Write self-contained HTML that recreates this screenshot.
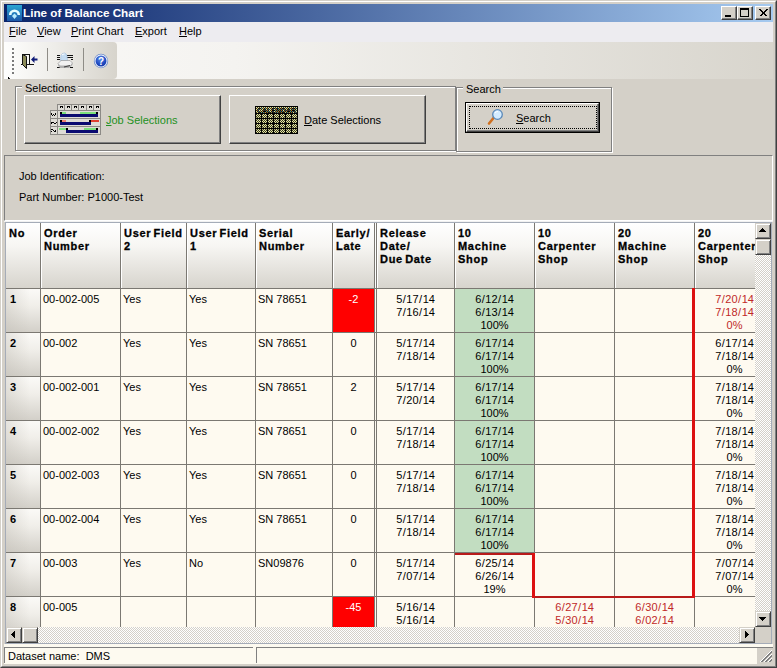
<!DOCTYPE html><html><head><meta charset="utf-8"><style>
*{margin:0;padding:0;box-sizing:border-box}
html,body{width:777px;height:668px;overflow:hidden;background:#D4D0C8;font-family:"Liberation Sans",sans-serif;font-size:11px;color:#000}
.a{position:absolute}
.t{position:absolute;white-space:nowrap;line-height:13px}
.c{text-align:center}
.b{font-weight:bold}
.h{letter-spacing:0.7px;word-spacing:-1.5px;-webkit-text-stroke:0.3px #000}
.ul{text-decoration:underline}
i{font-style:normal;margin:0 0.5px}
</style></head><body>

<div class="a" style="left:0;top:0;width:777px;height:668px;border-top:1px solid #D4D0C8;border-left:1px solid #D4D0C8;border-right:1px solid #404040;border-bottom:1px solid #404040"></div>
<div class="a" style="left:1px;top:1px;width:775px;height:666px;border-top:1px solid #fff;border-left:1px solid #fff;border-right:1px solid #808080;border-bottom:1px solid #808080"></div>
<div class="a" style="left:4px;top:4px;width:769px;height:18px;background:linear-gradient(to right,#0A246A,#A6CAF0)"></div>
<svg class="a" style="left:7px;top:5px" width="15" height="16"><defs><linearGradient id="ig" x1="0" y1="0" x2="0" y2="1"><stop offset="0" stop-color="#2AA6D2"/><stop offset="1" stop-color="#1C56A8"/></linearGradient><filter id="gl" x="-50%" y="-50%" width="200%" height="200%"><feGaussianBlur stdDeviation="0.6"/></filter></defs><rect width="15" height="16" fill="url(#ig)"/><g filter="url(#gl)"><path d="M3.2 10 A4.3 4.3 0 0 1 11.8 10" stroke="#E4FCFF" stroke-width="2.6" fill="none"/><path d="M7.5 8.5 L10 11 L7.5 14 L5 11 Z" fill="#B8ECFF"/></g></svg>
<div class="t b" style="left:23px;top:6px;color:#fff;font-size:11.7px;line-height:14px">Line of Balance Chart</div>
<div class="a" style="left:721px;top:6px;width:16px;height:14px;background:#D4D0C8;border-top:1px solid #fff;border-left:1px solid #fff;border-right:1px solid #404040;border-bottom:1px solid #404040;box-shadow:inset -1px -1px 0 #808080"></div>
<div class="a" style="left:737px;top:6px;width:16px;height:14px;background:#D4D0C8;border-top:1px solid #fff;border-left:1px solid #fff;border-right:1px solid #404040;border-bottom:1px solid #404040;box-shadow:inset -1px -1px 0 #808080"></div>
<div class="a" style="left:755px;top:6px;width:16px;height:14px;background:#D4D0C8;border-top:1px solid #fff;border-left:1px solid #fff;border-right:1px solid #404040;border-bottom:1px solid #404040;box-shadow:inset -1px -1px 0 #808080"></div>
<div class="a" style="left:725px;top:15px;width:6px;height:2px;background:#000"></div>
<div class="a" style="left:740px;top:8px;width:9px;height:9px;border:1px solid #000;border-top-width:2px"></div>
<svg class="a" style="left:755px;top:6px" width="16" height="14"><path d="M4.5 3.5 L11.5 10.5 M5.5 3.5 L12.5 10.5 M11.5 3.5 L4.5 10.5 M12.5 3.5 L5.5 10.5" stroke="#000" stroke-width="1" shape-rendering="crispEdges"/></svg>
<div class="a" style="left:4px;top:22px;width:769px;height:20px;background:#EDECF0"></div>
<div class="t" style="left:9px;top:25px"><span class="ul">F</span>ile</div>
<div class="t" style="left:37px;top:25px"><span class="ul">V</span>iew</div>
<div class="t" style="left:71px;top:25px"><span class="ul">P</span>rint Chart</div>
<div class="t" style="left:135px;top:25px"><span class="ul">E</span>xport</div>
<div class="t" style="left:179px;top:25px"><span class="ul">H</span>elp</div>
<div class="a" style="left:4px;top:42px;width:769px;height:37px;background:linear-gradient(to right,#FAF9F7,#F4F3F0 30%,#D8D5CD)"></div>
<div class="a" style="left:4px;top:42px;width:113px;height:37px;border-radius:0 4px 4px 0;background:linear-gradient(to right,#FEFEFD,#EEEDE9 45%,#D7D4CC)"></div>
<div class="a" style="left:12px;top:48px;width:2px;height:26px;background:repeating-linear-gradient(to bottom,#7A7A7A 0 2px,transparent 2px 4px)"></div>
<div class="a" style="left:47px;top:48px;width:1px;height:23px;background:#8E8C86"></div>
<div class="a" style="left:83px;top:48px;width:1px;height:23px;background:#8E8C86"></div>
<div class="a" style="left:8px;top:77px;width:1px;height:2px;background:#000"></div><div class="a" style="left:9px;top:78px;width:1px;height:1px;background:#222"></div>
<svg class="a" style="left:20px;top:52px" width="20" height="18"><path d="M2 2.5 H9.5 V12.5" fill="none" stroke="#111" shape-rendering="crispEdges"/><path d="M1 12.5 H14" stroke="#111" shape-rendering="crispEdges"/><path d="M2.5 2.5 L6.5 4.5 L6.5 16.5 L2.5 12.5 Z" fill="#8C8C58" stroke="#111"/><path d="M11 7.5 L14.5 4 V6.5 H17.5 V8.5 H14.5 V11 Z" fill="#101C78"/></svg>
<svg class="a" style="left:56px;top:52px" width="18" height="18"><g fill="#111" shape-rendering="crispEdges"><rect x="1" y="3" width="3" height="1"/><rect x="1" y="5" width="3" height="1"/><rect x="1" y="7" width="3" height="1"/><rect x="11" y="3" width="6" height="1"/><rect x="11" y="5" width="6" height="1"/><rect x="15" y="7" width="2" height="1"/><rect x="1" y="15" width="3" height="1"/><rect x="14" y="15" width="3" height="1"/></g><path d="M4.5 9 L5 3.5 Q6 1 8.5 1 Q10.5 1.5 11 4 L11.5 9 Z" fill="#C4DCF2" stroke="#9CB8D8" stroke-width="0.6"/><path d="M6 3 Q7 2 8.5 2" stroke="#fff" stroke-width="1" fill="none"/><path d="M2 11.5 L5 8.5 H14 L16.5 11 L14.5 14 H4 Z" fill="#F2F2F2" stroke="#9A9A9A" stroke-width="0.7"/><path d="M4 14 L2 11.5 V13.5 L4 16 H13 L16.5 13 V11 L14.5 14 Z" fill="#B0B0B0"/><path d="M8 15 L14 13.5" stroke="#444" stroke-width="1.2"/></svg>
<svg class="a" style="left:93px;top:53px" width="16" height="16"><defs><radialGradient id="hg" cx="0.45" cy="0.3" r="0.75"><stop offset="0" stop-color="#5A8AE6"/><stop offset="0.7" stop-color="#1C46BE"/><stop offset="1" stop-color="#1438A0"/></radialGradient></defs><circle cx="8" cy="8" r="7.2" fill="#6F8CC8"/><circle cx="8" cy="8" r="6.4" fill="#F4F8FF"/><circle cx="8" cy="8" r="5.5" fill="url(#hg)"/><text x="8" y="11.8" font-size="10" font-weight="bold" fill="#fff" text-anchor="middle" font-family="Liberation Sans">?</text></svg>
<div class="a" style="left:15px;top:86px;width:441px;height:65px;border:1px solid #808080;box-shadow:1px 1px 0 #fff, inset 1px 1px 0 #fff"></div>
<div class="t" style="left:22px;top:82px;background:#D4D0C8;padding:0 2px 0 3px">Selections</div>
<div class="a" style="left:456px;top:87px;width:156px;height:65px;border:1px solid #808080;box-shadow:1px 1px 0 #fff, inset 1px 1px 0 #fff"></div>
<div class="t" style="left:463px;top:83px;background:#D4D0C8;padding:0 2px 0 3px">Search</div>
<div class="a" style="left:24px;top:95px;width:197px;height:49px;background:#D4D0C8;border-top:1px solid #fff;border-left:1px solid #fff;border-right:1px solid #404040;border-bottom:1px solid #404040;box-shadow:inset -1px -1px 0 #808080"></div>
<div class="a" style="left:229px;top:95px;width:197px;height:49px;background:#D4D0C8;border-top:1px solid #fff;border-left:1px solid #fff;border-right:1px solid #404040;border-bottom:1px solid #404040;box-shadow:inset -1px -1px 0 #808080"></div>
<div class="t" style="left:106px;top:114px;color:#239023"><span class="ul">J</span>ob Selections</div>
<div class="t" style="left:304px;top:114px"><span class="ul">D</span>ate Selections</div>
<div class="a" style="left:465px;top:102px;width:135px;height:31px;border:1px solid #000"></div>
<div class="a" style="left:466px;top:103px;width:133px;height:29px;background:#D4D0C8;border-top:1px solid #fff;border-left:1px solid #fff;border-right:1px solid #404040;border-bottom:1px solid #404040;box-shadow:inset -1px -1px 0 #808080"></div>
<div class="a" style="left:469px;top:106px;width:128px;height:23px;border:1px dotted #000"></div>
<div class="t" style="left:516px;top:112px"><span class="ul">S</span>earch</div>
<svg class="a" style="left:487px;top:108px" width="16" height="19"><path d="M6.5 10 L2 15.5" stroke="#D07020" stroke-width="2.6" stroke-linecap="round"/><circle cx="10.5" cy="6.5" r="4.8" fill="#D4ECFF" stroke="#5A88B8" stroke-width="1.3"/><path d="M8 5 Q9 3.5 11 3.5" stroke="#fff" stroke-width="1" fill="none"/></svg>
<svg class="a" style="left:50px;top:104px" width="51" height="31" shape-rendering="crispEdges"><rect x="7" y="0" width="44" height="31" fill="#8C8A86"/><rect x="0" y="6" width="51" height="25" fill="#8C8A86"/><rect x="8" y="1" width="6" height="5" fill="#DEDCD6"/><rect x="10" y="2" width="3" height="1" fill="#000"/><rect x="10" y="3" width="1" height="1" fill="#000"/><rect x="12" y="3" width="1" height="1" fill="#000"/><rect x="15" y="1" width="6" height="5" fill="#DEDCD6"/><rect x="17" y="2" width="3" height="1" fill="#000"/><rect x="17" y="3" width="1" height="1" fill="#000"/><rect x="19" y="3" width="1" height="1" fill="#000"/><rect x="22" y="1" width="6" height="5" fill="#DEDCD6"/><rect x="24" y="2" width="3" height="1" fill="#000"/><rect x="24" y="3" width="1" height="1" fill="#000"/><rect x="26" y="3" width="1" height="1" fill="#000"/><rect x="29" y="1" width="7" height="5" fill="#DEDCD6"/><rect x="31" y="2" width="3" height="1" fill="#000"/><rect x="31" y="3" width="1" height="1" fill="#000"/><rect x="33" y="3" width="1" height="1" fill="#000"/><rect x="37" y="1" width="6" height="5" fill="#DEDCD6"/><rect x="39" y="2" width="3" height="1" fill="#000"/><rect x="39" y="3" width="1" height="1" fill="#000"/><rect x="41" y="3" width="1" height="1" fill="#000"/><rect x="44" y="1" width="6" height="5" fill="#DEDCD6"/><rect x="46" y="2" width="3" height="1" fill="#000"/><rect x="46" y="3" width="1" height="1" fill="#000"/><rect x="48" y="3" width="1" height="1" fill="#000"/><rect x="1" y="7" width="6" height="7" fill="#DEDCD6"/><rect x="8" y="7" width="42" height="7" fill="#DEDCD6"/><rect x="1" y="9" width="1" height="1" fill="#000"/><rect x="1" y="10" width="1" height="1" fill="#000"/><rect x="2" y="11" width="1" height="1" fill="#000"/><rect x="3" y="10" width="1" height="1" fill="#000"/><rect x="4" y="11" width="1" height="1" fill="#000"/><rect x="5" y="10" width="1" height="1" fill="#000"/><rect x="5" y="9" width="1" height="1" fill="#000"/><rect x="1" y="15" width="6" height="7" fill="#DEDCD6"/><rect x="8" y="15" width="42" height="7" fill="#DEDCD6"/><rect x="1" y="19" width="1" height="1" fill="#000"/><rect x="2" y="18" width="1" height="1" fill="#000"/><rect x="3" y="18" width="1" height="1" fill="#000"/><rect x="4" y="19" width="1" height="1" fill="#000"/><rect x="5" y="19" width="1" height="1" fill="#000"/><rect x="6" y="18" width="1" height="1" fill="#000"/><rect x="1" y="18" width="1" height="1" fill="#000"/><rect x="1" y="23" width="6" height="7" fill="#DEDCD6"/><rect x="8" y="23" width="42" height="7" fill="#DEDCD6"/><rect x="1" y="25" width="1" height="1" fill="#000"/><rect x="2" y="25" width="1" height="1" fill="#000"/><rect x="3" y="26" width="1" height="1" fill="#000"/><rect x="4" y="27" width="1" height="1" fill="#000"/><rect x="5" y="27" width="1" height="1" fill="#000"/><rect x="5" y="26" width="1" height="1" fill="#000"/><rect x="1" y="27" width="1" height="1" fill="#000"/><rect x="10" y="8" width="6" height="2" fill="#7CE07C"/><rect x="30" y="8" width="17" height="2" fill="#7CE07C"/><rect x="10" y="10" width="38" height="3" fill="#0A0A70"/><rect x="10" y="8" width="2" height="2" fill="#000"/><rect x="46" y="8" width="2" height="2" fill="#000"/><rect x="10" y="16" width="6" height="2" fill="#F08070"/><rect x="41" y="16" width="8" height="2" fill="#E04030"/><rect x="10" y="18" width="31" height="3" fill="#0A0A70"/><rect x="10" y="16" width="2" height="2" fill="#000"/><rect x="39" y="16" width="2" height="2" fill="#000"/><rect x="9" y="24" width="7" height="2" fill="#7CE07C"/><rect x="34" y="24" width="13" height="2" fill="#7CE07C"/><rect x="16" y="26" width="32" height="3" fill="#0A0A70"/><rect x="16" y="24" width="2" height="2" fill="#000"/><rect x="46" y="24" width="2" height="2" fill="#000"/></svg>
<svg class="a" style="left:255px;top:106px" width="43" height="28" shape-rendering="crispEdges"><defs><pattern id="dp" width="2" height="2" patternUnits="userSpaceOnUse"><rect width="2" height="2" fill="#E4E4A4"/><rect x="1" y="0" width="1" height="1" fill="#3A3A20"/><rect x="0" y="1" width="1" height="1" fill="#3A3A20"/></pattern></defs><rect width="43" height="28" fill="#000"/><rect x="1" y="1" width="41" height="6" fill="url(#dp)"/><text x="2" y="6.5" font-size="7" textLength="39" lengthAdjust="spacingAndGlyphs" fill="#000" font-family="Liberation Sans" font-weight="bold" style="-webkit-text-stroke:0.3px #000">CALENDAR</text><rect x="1" y="8" width="5" height="4" rx="1" fill="url(#dp)" shape-rendering="auto"/><rect x="7" y="8" width="5" height="4" rx="1" fill="url(#dp)" shape-rendering="auto"/><rect x="13" y="8" width="5" height="4" rx="1" fill="url(#dp)" shape-rendering="auto"/><rect x="19" y="8" width="5" height="4" rx="1" fill="url(#dp)" shape-rendering="auto"/><rect x="25" y="8" width="5" height="4" rx="1" fill="url(#dp)" shape-rendering="auto"/><rect x="31" y="8" width="5" height="4" rx="1" fill="url(#dp)" shape-rendering="auto"/><rect x="37" y="8" width="5" height="4" rx="1" fill="url(#dp)" shape-rendering="auto"/><rect x="1" y="13" width="5" height="4" rx="1" fill="url(#dp)" shape-rendering="auto"/><rect x="7" y="13" width="5" height="4" rx="1" fill="url(#dp)" shape-rendering="auto"/><rect x="13" y="13" width="5" height="4" rx="1" fill="url(#dp)" shape-rendering="auto"/><rect x="19" y="13" width="5" height="4" rx="1" fill="url(#dp)" shape-rendering="auto"/><rect x="25" y="13" width="5" height="4" rx="1" fill="url(#dp)" shape-rendering="auto"/><rect x="31" y="13" width="5" height="4" rx="1" fill="url(#dp)" shape-rendering="auto"/><rect x="37" y="13" width="5" height="4" rx="1" fill="url(#dp)" shape-rendering="auto"/><rect x="1" y="18" width="5" height="4" rx="1" fill="url(#dp)" shape-rendering="auto"/><rect x="7" y="18" width="5" height="4" rx="1" fill="url(#dp)" shape-rendering="auto"/><rect x="13" y="18" width="5" height="4" rx="1" fill="url(#dp)" shape-rendering="auto"/><rect x="19" y="18" width="5" height="4" rx="1" fill="url(#dp)" shape-rendering="auto"/><rect x="25" y="18" width="5" height="4" rx="1" fill="url(#dp)" shape-rendering="auto"/><rect x="31" y="18" width="5" height="4" rx="1" fill="url(#dp)" shape-rendering="auto"/><rect x="37" y="18" width="5" height="4" rx="1" fill="url(#dp)" shape-rendering="auto"/><rect x="1" y="23" width="5" height="4" rx="1" fill="url(#dp)" shape-rendering="auto"/><rect x="7" y="23" width="5" height="4" rx="1" fill="url(#dp)" shape-rendering="auto"/><rect x="13" y="23" width="5" height="4" rx="1" fill="url(#dp)" shape-rendering="auto"/><rect x="19" y="23" width="5" height="4" rx="1" fill="url(#dp)" shape-rendering="auto"/><rect x="25" y="23" width="5" height="4" rx="1" fill="url(#dp)" shape-rendering="auto"/><rect x="31" y="23" width="5" height="4" rx="1" fill="url(#dp)" shape-rendering="auto"/><rect x="37" y="23" width="5" height="4" rx="1" fill="url(#dp)" shape-rendering="auto"/></svg>
<div class="a" style="left:4px;top:155px;width:769px;height:66px;border-top:1px solid #808080;border-left:1px solid #808080;border-bottom:1px solid #fff;border-right:1px solid #fff"></div>
<div class="t" style="left:19px;top:170px">Job Identification:</div>
<div class="t" style="left:19px;top:191px">Part Number: P1000-Test</div>
<div class="a" style="left:4px;top:221px;width:769px;height:1px;background:#F2F2F2"></div>
<div class="a" style="left:5px;top:222px;width:767px;height:422px;border:1px solid #A5ACB8;background:#FEFAF0;overflow:hidden">
<div class="a" style="left:0px;top:0px;width:749px;height:65px;background:linear-gradient(to bottom,#FFFFFF 0%,#F7F6F3 35%,#D7D4CD 100%);"></div><div class="a" style="left:0px;top:66px;width:34px;height:43px;background:linear-gradient(to right,rgba(190,186,178,0.35),rgba(255,255,255,0) 70%),linear-gradient(to bottom,#FBFAF7 0%,#F0EEE9 40%,#D3D0C9 100%);"></div><div class="a" style="left:0px;top:110px;width:34px;height:43px;background:linear-gradient(to right,rgba(190,186,178,0.35),rgba(255,255,255,0) 70%),linear-gradient(to bottom,#FBFAF7 0%,#F0EEE9 40%,#D3D0C9 100%);"></div><div class="a" style="left:0px;top:154px;width:34px;height:43px;background:linear-gradient(to right,rgba(190,186,178,0.35),rgba(255,255,255,0) 70%),linear-gradient(to bottom,#FBFAF7 0%,#F0EEE9 40%,#D3D0C9 100%);"></div><div class="a" style="left:0px;top:198px;width:34px;height:43px;background:linear-gradient(to right,rgba(190,186,178,0.35),rgba(255,255,255,0) 70%),linear-gradient(to bottom,#FBFAF7 0%,#F0EEE9 40%,#D3D0C9 100%);"></div><div class="a" style="left:0px;top:242px;width:34px;height:43px;background:linear-gradient(to right,rgba(190,186,178,0.35),rgba(255,255,255,0) 70%),linear-gradient(to bottom,#FBFAF7 0%,#F0EEE9 40%,#D3D0C9 100%);"></div><div class="a" style="left:0px;top:286px;width:34px;height:43px;background:linear-gradient(to right,rgba(190,186,178,0.35),rgba(255,255,255,0) 70%),linear-gradient(to bottom,#FBFAF7 0%,#F0EEE9 40%,#D3D0C9 100%);"></div><div class="a" style="left:0px;top:330px;width:34px;height:43px;background:linear-gradient(to right,rgba(190,186,178,0.35),rgba(255,255,255,0) 70%),linear-gradient(to bottom,#FBFAF7 0%,#F0EEE9 40%,#D3D0C9 100%);"></div><div class="a" style="left:0px;top:374px;width:34px;height:43px;background:linear-gradient(to right,rgba(190,186,178,0.35),rgba(255,255,255,0) 70%),linear-gradient(to bottom,#FBFAF7 0%,#F0EEE9 40%,#D3D0C9 100%);"></div><div class="a" style="left:327px;top:66px;width:41px;height:43px;background:#FF0000;"></div><div class="a" style="left:327px;top:374px;width:41px;height:43px;background:#FF0000;"></div><div class="a" style="left:449px;top:66px;width:79px;height:43px;background:#C2DDC1;"></div><div class="a" style="left:449px;top:110px;width:79px;height:43px;background:#C2DDC1;"></div><div class="a" style="left:449px;top:154px;width:79px;height:43px;background:#C2DDC1;"></div><div class="a" style="left:449px;top:198px;width:79px;height:43px;background:#C2DDC1;"></div><div class="a" style="left:449px;top:242px;width:79px;height:43px;background:#C2DDC1;"></div><div class="a" style="left:449px;top:286px;width:79px;height:43px;background:#C2DDC1;"></div><div class="a" style="left:34px;top:0px;width:1px;height:420px;background:#7B7872;"></div><div class="a" style="left:114px;top:0px;width:1px;height:420px;background:#7B7872;"></div><div class="a" style="left:180px;top:0px;width:1px;height:420px;background:#7B7872;"></div><div class="a" style="left:249px;top:0px;width:1px;height:420px;background:#7B7872;"></div><div class="a" style="left:326px;top:0px;width:1px;height:420px;background:#7B7872;"></div><div class="a" style="left:368px;top:0px;width:1px;height:420px;background:#7B7872;"></div><div class="a" style="left:448px;top:0px;width:1px;height:420px;background:#7B7872;"></div><div class="a" style="left:528px;top:0px;width:1px;height:420px;background:#7B7872;"></div><div class="a" style="left:608px;top:0px;width:1px;height:420px;background:#7B7872;"></div><div class="a" style="left:688px;top:0px;width:1px;height:420px;background:#7B7872;"></div><div class="a" style="left:370px;top:0px;width:1px;height:420px;background:#7B7872;"></div><div class="a" style="left:35px;top:0px;width:1px;height:65px;background:#FFFFFF;"></div><div class="a" style="left:115px;top:0px;width:1px;height:65px;background:#FFFFFF;"></div><div class="a" style="left:181px;top:0px;width:1px;height:65px;background:#FFFFFF;"></div><div class="a" style="left:250px;top:0px;width:1px;height:65px;background:#FFFFFF;"></div><div class="a" style="left:327px;top:0px;width:1px;height:65px;background:#FFFFFF;"></div><div class="a" style="left:369px;top:0px;width:1px;height:65px;background:#FFFFFF;"></div><div class="a" style="left:449px;top:0px;width:1px;height:65px;background:#FFFFFF;"></div><div class="a" style="left:529px;top:0px;width:1px;height:65px;background:#FFFFFF;"></div><div class="a" style="left:609px;top:0px;width:1px;height:65px;background:#FFFFFF;"></div><div class="a" style="left:689px;top:0px;width:1px;height:65px;background:#FFFFFF;"></div><div class="a" style="left:371px;top:0px;width:1px;height:65px;background:#FFFFFF;"></div><div class="a" style="left:0px;top:65px;width:749px;height:1px;background:#7B7872;"></div><div class="a" style="left:0px;top:109px;width:749px;height:1px;background:#7B7872;"></div><div class="a" style="left:0px;top:153px;width:749px;height:1px;background:#7B7872;"></div><div class="a" style="left:0px;top:197px;width:749px;height:1px;background:#7B7872;"></div><div class="a" style="left:0px;top:241px;width:749px;height:1px;background:#7B7872;"></div><div class="a" style="left:0px;top:285px;width:749px;height:1px;background:#7B7872;"></div><div class="a" style="left:0px;top:329px;width:749px;height:1px;background:#7B7872;"></div><div class="a" style="left:0px;top:373px;width:749px;height:1px;background:#7B7872;"></div><div class="t b h" style="left:3px;top:4px">No</div><div class="t b h" style="left:38px;top:4px">Order<br>Number</div><div class="t b h" style="left:118px;top:4px">User Field<br>2</div><div class="t b h" style="left:184px;top:4px">User Field<br>1</div><div class="t b h" style="left:253px;top:4px">Serial<br>Number</div><div class="t b h" style="left:330px;top:4px">Early/<br>Late</div><div class="t b h" style="left:374px;top:4px">Release<br>Date/<br>Due Date</div><div class="t b h" style="left:452px;top:4px">10<br>Machine<br>Shop</div><div class="t b h" style="left:532px;top:4px">10<br>Carpenter<br>Shop</div><div class="t b h" style="left:612px;top:4px">20<br>Machine<br>Shop</div><div class="t b h" style="left:692px;top:4px">20<br>Carpenter<br>Shop</div><div class="t b" style="left:4px;top:70px">1</div><div class="t" style="left:37px;top:70px">00-002-005</div><div class="t" style="left:117px;top:70px">Yes</div><div class="t" style="left:183px;top:70px">Yes</div><div class="t" style="left:252px;top:70px">SN 78651</div><div class="t c" style="left:327px;top:70px;width:41px;color:#fff;">-2</div><div class="t c" style="left:371px;top:70px;width:77px;">5<i>/</i>17<i>/</i>14<br>7<i>/</i>16<i>/</i>14</div><div class="t c" style="left:449px;top:70px;width:79px;">6<i>/</i>12<i>/</i>14<br>6<i>/</i>13<i>/</i>14<br>100%</div><div class="t c" style="left:689px;top:70px;width:79px;color:#C02828;">7<i>/</i>20<i>/</i>14<br>7<i>/</i>18<i>/</i>14<br>0%</div><div class="t b" style="left:4px;top:114px">2</div><div class="t" style="left:37px;top:114px">00-002</div><div class="t" style="left:117px;top:114px">Yes</div><div class="t" style="left:183px;top:114px">Yes</div><div class="t" style="left:252px;top:114px">SN 78651</div><div class="t c" style="left:327px;top:114px;width:41px;">0</div><div class="t c" style="left:371px;top:114px;width:77px;">5<i>/</i>17<i>/</i>14<br>7<i>/</i>18<i>/</i>14</div><div class="t c" style="left:449px;top:114px;width:79px;">6<i>/</i>17<i>/</i>14<br>6<i>/</i>17<i>/</i>14<br>100%</div><div class="t c" style="left:689px;top:114px;width:79px;">6<i>/</i>17<i>/</i>14<br>7<i>/</i>18<i>/</i>14<br>0%</div><div class="t b" style="left:4px;top:158px">3</div><div class="t" style="left:37px;top:158px">00-002-001</div><div class="t" style="left:117px;top:158px">Yes</div><div class="t" style="left:183px;top:158px">Yes</div><div class="t" style="left:252px;top:158px">SN 78651</div><div class="t c" style="left:327px;top:158px;width:41px;">2</div><div class="t c" style="left:371px;top:158px;width:77px;">5<i>/</i>17<i>/</i>14<br>7<i>/</i>20<i>/</i>14</div><div class="t c" style="left:449px;top:158px;width:79px;">6<i>/</i>17<i>/</i>14<br>6<i>/</i>17<i>/</i>14<br>100%</div><div class="t c" style="left:689px;top:158px;width:79px;">7<i>/</i>18<i>/</i>14<br>7<i>/</i>18<i>/</i>14<br>0%</div><div class="t b" style="left:4px;top:202px">4</div><div class="t" style="left:37px;top:202px">00-002-002</div><div class="t" style="left:117px;top:202px">Yes</div><div class="t" style="left:183px;top:202px">Yes</div><div class="t" style="left:252px;top:202px">SN 78651</div><div class="t c" style="left:327px;top:202px;width:41px;">0</div><div class="t c" style="left:371px;top:202px;width:77px;">5<i>/</i>17<i>/</i>14<br>7<i>/</i>18<i>/</i>14</div><div class="t c" style="left:449px;top:202px;width:79px;">6<i>/</i>17<i>/</i>14<br>6<i>/</i>17<i>/</i>14<br>100%</div><div class="t c" style="left:689px;top:202px;width:79px;">7<i>/</i>18<i>/</i>14<br>7<i>/</i>18<i>/</i>14<br>0%</div><div class="t b" style="left:4px;top:246px">5</div><div class="t" style="left:37px;top:246px">00-002-003</div><div class="t" style="left:117px;top:246px">Yes</div><div class="t" style="left:183px;top:246px">Yes</div><div class="t" style="left:252px;top:246px">SN 78651</div><div class="t c" style="left:327px;top:246px;width:41px;">0</div><div class="t c" style="left:371px;top:246px;width:77px;">5<i>/</i>17<i>/</i>14<br>7<i>/</i>18<i>/</i>14</div><div class="t c" style="left:449px;top:246px;width:79px;">6<i>/</i>17<i>/</i>14<br>6<i>/</i>17<i>/</i>14<br>100%</div><div class="t c" style="left:689px;top:246px;width:79px;">7<i>/</i>18<i>/</i>14<br>7<i>/</i>18<i>/</i>14<br>0%</div><div class="t b" style="left:4px;top:290px">6</div><div class="t" style="left:37px;top:290px">00-002-004</div><div class="t" style="left:117px;top:290px">Yes</div><div class="t" style="left:183px;top:290px">Yes</div><div class="t" style="left:252px;top:290px">SN 78651</div><div class="t c" style="left:327px;top:290px;width:41px;">0</div><div class="t c" style="left:371px;top:290px;width:77px;">5<i>/</i>17<i>/</i>14<br>7<i>/</i>18<i>/</i>14</div><div class="t c" style="left:449px;top:290px;width:79px;">6<i>/</i>17<i>/</i>14<br>6<i>/</i>17<i>/</i>14<br>100%</div><div class="t c" style="left:689px;top:290px;width:79px;">7<i>/</i>18<i>/</i>14<br>7<i>/</i>18<i>/</i>14<br>0%</div><div class="t b" style="left:4px;top:334px">7</div><div class="t" style="left:37px;top:334px">00-003</div><div class="t" style="left:117px;top:334px">Yes</div><div class="t" style="left:183px;top:334px">No</div><div class="t" style="left:252px;top:334px">SN09876</div><div class="t c" style="left:327px;top:334px;width:41px;">0</div><div class="t c" style="left:371px;top:334px;width:77px;">5<i>/</i>17<i>/</i>14<br>7<i>/</i>07<i>/</i>14</div><div class="t c" style="left:449px;top:334px;width:79px;">6<i>/</i>25<i>/</i>14<br>6<i>/</i>26<i>/</i>14<br>19%</div><div class="t c" style="left:689px;top:334px;width:79px;">7<i>/</i>07<i>/</i>14<br>7<i>/</i>07<i>/</i>14<br>0%</div><div class="t b" style="left:4px;top:378px">8</div><div class="t" style="left:37px;top:378px">00-005</div><div class="t c" style="left:327px;top:378px;width:41px;color:#fff;">-45</div><div class="t c" style="left:371px;top:378px;width:77px;">5<i>/</i>16<i>/</i>14<br>5<i>/</i>16<i>/</i>14</div><div class="t c" style="left:529px;top:378px;width:79px;color:#C02828;">6<i>/</i>27<i>/</i>14<br>5<i>/</i>30<i>/</i>14</div><div class="t c" style="left:609px;top:378px;width:79px;color:#C02828;">6<i>/</i>30<i>/</i>14<br>6<i>/</i>02<i>/</i>14</div><div class="a" style="left:686px;top:65px;width:3px;height:310px;background:#DC1010;"></div><div class="a" style="left:528px;top:373px;width:158px;height:2px;background:#B81A1A;"></div><div class="a" style="left:526px;top:330px;width:3px;height:45px;background:#DC1010;"></div><div class="a" style="left:449px;top:330px;width:77px;height:2px;background:#B81A1A;"></div><div class="a" style="left:749px;top:0px;width:16px;height:404px;background:#fff;background-image:linear-gradient(45deg,#D4D0C8 25%,transparent 25%,transparent 75%,#D4D0C8 75%),linear-gradient(45deg,#D4D0C8 25%,transparent 25%,transparent 75%,#D4D0C8 75%);background-size:2px 2px;background-position:0 0,1px 1px;"></div><div class="a" style="left:0px;top:404px;width:749px;height:16px;background:#fff;background-image:linear-gradient(45deg,#D4D0C8 25%,transparent 25%,transparent 75%,#D4D0C8 75%),linear-gradient(45deg,#D4D0C8 25%,transparent 25%,transparent 75%,#D4D0C8 75%);background-size:2px 2px;background-position:0 0,1px 1px;"></div><div class="a" style="left:749px;top:0px;width:16px;height:16px;background:#D4D0C8;border-top:1px solid #D4D0C8;border-left:1px solid #D4D0C8;border-right:1px solid #404040;border-bottom:1px solid #404040;box-shadow:inset 1px 1px 0 #fff,inset -1px -1px 0 #808080"></div><div class="a" style="left:749px;top:16px;width:16px;height:16px;background:#D4D0C8;border-top:1px solid #D4D0C8;border-left:1px solid #D4D0C8;border-right:1px solid #404040;border-bottom:1px solid #404040;box-shadow:inset 1px 1px 0 #fff,inset -1px -1px 0 #808080"></div><div class="a" style="left:749px;top:388px;width:16px;height:16px;background:#D4D0C8;border-top:1px solid #D4D0C8;border-left:1px solid #D4D0C8;border-right:1px solid #404040;border-bottom:1px solid #404040;box-shadow:inset 1px 1px 0 #fff,inset -1px -1px 0 #808080"></div><div class="a" style="left:0px;top:404px;width:16px;height:16px;background:#D4D0C8;border-top:1px solid #D4D0C8;border-left:1px solid #D4D0C8;border-right:1px solid #404040;border-bottom:1px solid #404040;box-shadow:inset 1px 1px 0 #fff,inset -1px -1px 0 #808080"></div><div class="a" style="left:16px;top:404px;width:16px;height:16px;background:#D4D0C8;border-top:1px solid #D4D0C8;border-left:1px solid #D4D0C8;border-right:1px solid #404040;border-bottom:1px solid #404040;box-shadow:inset 1px 1px 0 #fff,inset -1px -1px 0 #808080"></div><div class="a" style="left:733px;top:404px;width:16px;height:16px;background:#D4D0C8;border-top:1px solid #D4D0C8;border-left:1px solid #D4D0C8;border-right:1px solid #404040;border-bottom:1px solid #404040;box-shadow:inset 1px 1px 0 #fff,inset -1px -1px 0 #808080"></div><div class="a" style="left:749px;top:404px;width:16px;height:16px;background:#D4D0C8;"></div><svg class="a" style="left:753px;top:5px" width="7" height="4" shape-rendering="crispEdges"><path d="M3 0h1v1h1v1h1v1h1v1H0V3h1V2h1V1h1z" fill="#000"/></svg><svg class="a" style="left:753px;top:394px" width="7" height="4" shape-rendering="crispEdges"><path d="M0 0h7v1h-1v1h-1v1h-1v1h-1V3H2V2H1V1H0z" fill="#000"/></svg><svg class="a" style="left:5px;top:408px" width="4" height="7" shape-rendering="crispEdges"><path d="M3 0h1v7H3V6H2V5H1V4H0V3h1V2h1V1h1z" fill="#000"/></svg><svg class="a" style="left:739px;top:408px" width="4" height="7" shape-rendering="crispEdges"><path d="M0 0h1v1h1v1h1v1h1v1H3v1H2v1H1v1H0z" fill="#000"/></svg></div>
<div class="a" style="left:4px;top:644px;width:769px;height:20px;background:#FDFAF0"></div>
<div class="a" style="left:4px;top:647px;width:249px;height:16px;border-top:1px solid #808080;border-left:1px solid #808080"></div>
<div class="a" style="left:256px;top:647px;width:517px;height:16px;border-top:1px solid #808080;border-left:1px solid #808080"></div>
<div class="a" style="left:757px;top:648px;width:16px;height:16px;background:#D4D0C8"></div>
<svg class="a" style="left:757px;top:648px" width="16" height="16" shape-rendering="crispEdges"><g stroke-width="1"><path d="M15 2 L3 14" stroke="#fff"/><path d="M15 3 L4 14 M15 4 L5 14" stroke="#808080"/><path d="M15 6 L7 14" stroke="#fff"/><path d="M15 7 L8 14 M15 8 L9 14" stroke="#808080"/><path d="M15 10 L11 14" stroke="#fff"/><path d="M15 11 L12 14 M15 12 L13 14" stroke="#808080"/></g></svg>
<div class="t" style="left:8px;top:650px">Dataset name:&nbsp; DMS</div>
</body></html>
